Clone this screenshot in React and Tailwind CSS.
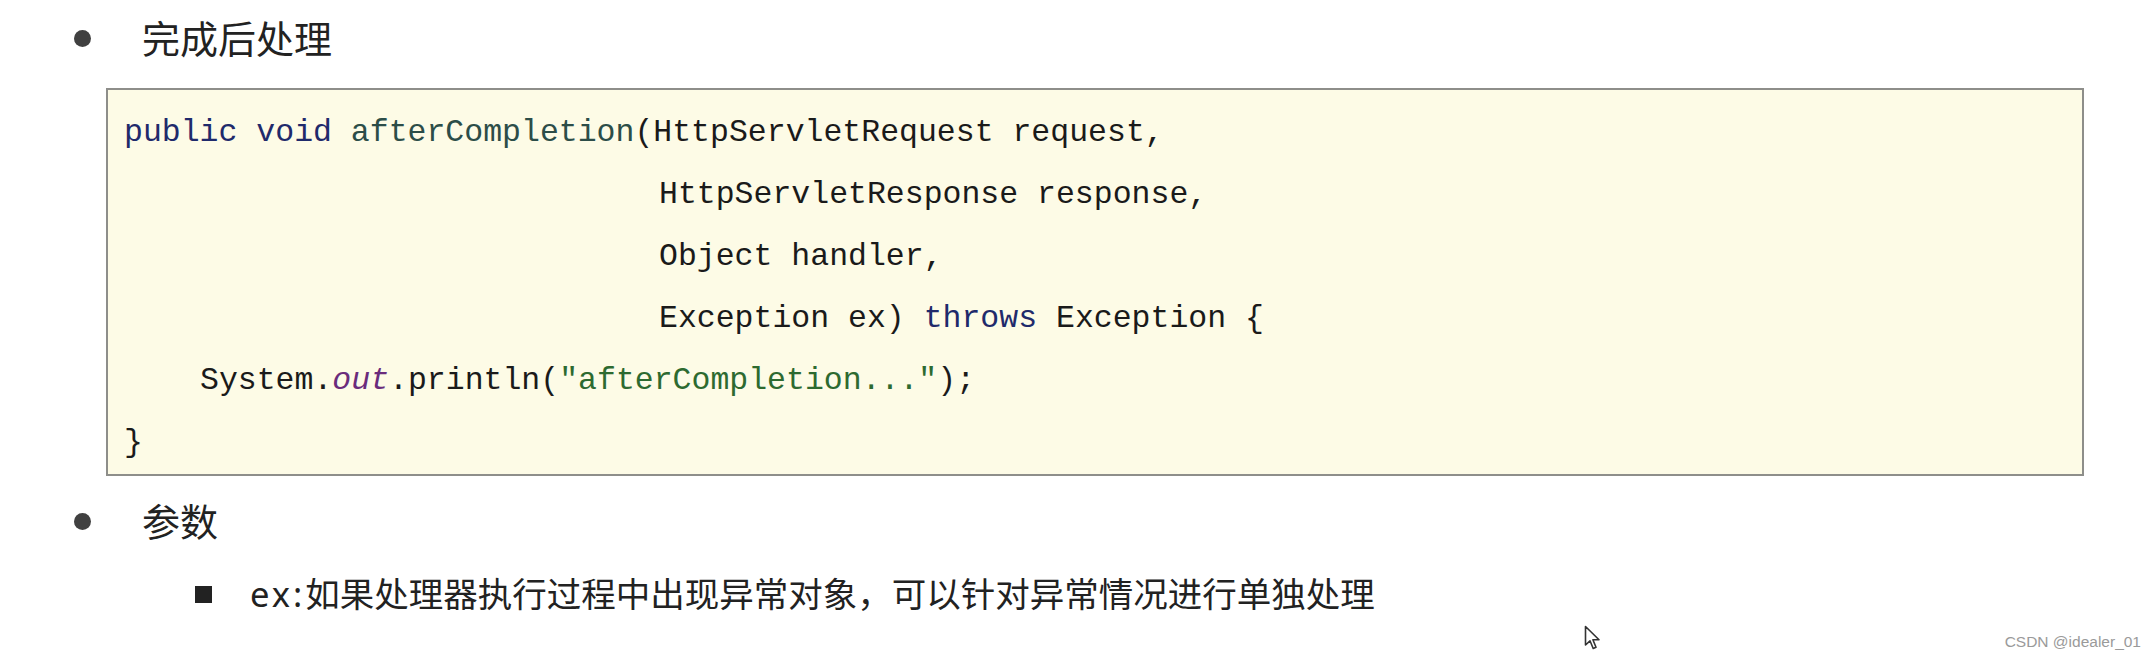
import React from 'react';

const kw = 'text-[#1f2a6b]';

const CodeLine = ({ indent = 0, children }) => (
  <div className="h-[62px] leading-[62px] whitespace-pre" style={{ marginLeft: indent }}>
    {children}
  </div>
);

const Cursor = () => (
  <svg width="18" height="26" viewBox="0 0 18 26" className="absolute left-[1584px] top-[625px]">
    <path
      d="M1.5 1.5 L1.5 20 L6 15.8 L9.2 23.5 L12 22.3 L8.9 14.8 L15 14.8 Z"
      fill="#fff"
      stroke="#333"
      strokeWidth="1.6"
      strokeLinejoin="round"
    />
  </svg>
);

export default function App() {
  return (
    <div
      className="relative w-[2156px] h-[660px] overflow-hidden bg-white text-[#222]"
      style={{ fontFamily: '"Noto Sans", "Noto Sans CJK SC", sans-serif' }}
    >
      {/* heading */}
      <div className="flex items-center h-[76px] pl-[74px]">
        <span className="w-[17px] h-[17px] rounded-full bg-[#404040]" />
        <span className="ml-[51px] text-[38px] leading-none">完成后处理</span>
      </div>

      {/* code block */}
      <div
        className="mt-[12px] ml-[106px] w-[1978px] h-[388px] border-2 border-[#8e8e8a] bg-[#fdfbe6] pt-[12px] pl-[16px] text-[31.5px] text-[#1a1a1a]"
        style={{ fontFamily: '"Liberation Mono", "DejaVu Sans Mono", monospace' }}
      >
        <CodeLine>
          <span className={kw}>public</span> <span className={kw}>void</span>{' '}
          <span className="text-[#2c4d48]">afterCompletion</span>(HttpServletRequest request,
        </CodeLine>
        <CodeLine indent={535}>HttpServletResponse response,</CodeLine>
        <CodeLine indent={535}>Object handler,</CodeLine>
        <CodeLine indent={535}>
          Exception ex) <span className={kw}>throws</span> Exception {'{'}
        </CodeLine>
        <CodeLine indent={76}>
          System.<span className="italic text-[#6a2c7c]">out</span>.println(
          <span className="text-[#2d6a30]">"afterCompletion..."</span>);
        </CodeLine>
        <CodeLine>{'}'}</CodeLine>
      </div>

      {/* params */}
      <div className="flex items-center mt-[7px] h-[76px] pl-[74px]">
        <span className="w-[17px] h-[17px] rounded-full bg-[#404040]" />
        <span className="ml-[51px] text-[38px] leading-none">参数</span>
      </div>

      <div className="flex items-center mt-[10px] h-[50px] pl-[195px]">
        <span className="w-[17px] h-[17px] bg-[#222]" />
        <span className="ml-[38px] text-[34.5px] leading-none whitespace-nowrap">
          <span className="tracking-[3px]">ex:</span>
          如果处理器执行过程中出现异常对象，可以针对异常情况进行单独处理
        </span>
      </div>

      <Cursor />

      <div
        className="absolute right-[15px] top-[632px] text-[15.5px] leading-[20px] text-[#9a9a9a]"
        style={{ fontFamily: '"Liberation Sans", sans-serif' }}
      >
        CSDN @idealer_01
      </div>
    </div>
  );
}
